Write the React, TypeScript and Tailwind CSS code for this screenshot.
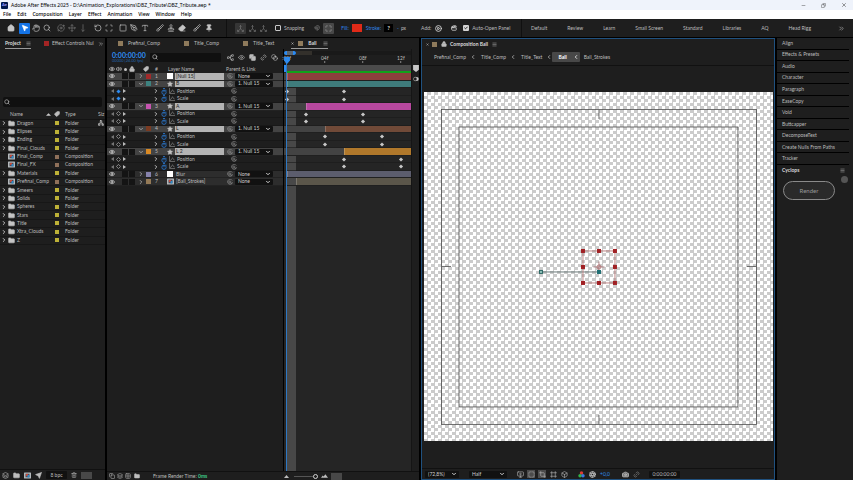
import type { ComponentType, ReactNode } from 'react';
import clsx from 'clsx';
import {
  Aperture, Blend, Box, Brush, Camera, Check, ChevronDown, ChevronLeft, ChevronRight, ChevronsRight,
  CirclePlay, Clapperboard, Copy, Crop, Eraser, Eye, Folder, Frame, Grid2x2, Hand, House, Layers, Link2,
  Lock, Magnet, Maximize, Menu, Minus, MonitorPlay, MousePointer2, Move, MoveDown, Network, Orbit, PenTool, Pin,
  RotateCcw, Scan, Search, Send, Square, SquareDashed, Stamp, Star, Tag, Trash2, Type, Volume2, X,
} from 'lucide-react';

type Icon = ComponentType<{ className?: string; strokeWidth?: number }>;

const MENUS = ['File', 'Edit', 'Composition', 'Layer', 'Effect', 'Animation', 'View', 'Window', 'Help'];

const WORKSPACES = ['Default', 'Review', 'Learn', 'Small Screen', 'Standard', 'Libraries', 'AQ', 'Head Rigg'];

const TOOLS: { label: string; icon: Icon; gap?: string; fill?: boolean; dim?: boolean; active?: boolean }[] = [
  { label: 'Home', icon: House, fill: true },
  { label: 'Selection', icon: MousePointer2, gap: 'ml-[3px]', fill: true, active: true },
  { label: 'Hand', icon: Hand },
  { label: 'Zoom', icon: Search },
  { label: 'Orbit', icon: Orbit, gap: 'ml-[3px]', dim: true },
  { label: 'Pan', icon: Move, dim: true },
  { label: 'Dolly', icon: MoveDown, dim: true },
  { label: 'Rotation', icon: RotateCcw, gap: 'ml-1' },
  { label: 'Pan behind', icon: Scan },
  { label: 'Rectangle', icon: Square, gap: 'ml-[3px]' },
  { label: 'Pen', icon: PenTool },
  { label: 'Type', icon: Type },
  { label: 'Brush', icon: Brush, gap: 'ml-1' },
  { label: 'Clone stamp', icon: Stamp },
  { label: 'Eraser', icon: Eraser, fill: true },
  { label: 'Roto brush', icon: Brush, gap: 'ml-1' },
  { label: 'Puppet pin', icon: Pin, gap: 'ml-px', fill: true },
];

const FILES: { name: string; comp?: boolean }[] = [
  { name: 'Dragon' },
  { name: 'Elipses' },
  { name: 'Ending' },
  { name: 'Final_Clouds' },
  { name: 'Final_Comp', comp: true },
  { name: 'Final_FX', comp: true },
  { name: 'Materials' },
  { name: 'Prefinal_Comp', comp: true },
  { name: 'Smeers' },
  { name: 'Solids' },
  { name: 'Spheres' },
  { name: 'Stars' },
  { name: 'Title' },
  { name: 'Xtra_Clouds' },
  { name: 'Z' },
];

interface Layer {
  id: number;
  name: string;
  parent: string;
  kind: 'null' | 'shape' | 'comp';
  swatch: string;
  bar: string;
  start: number;
  selected?: boolean;
  keys?: number[];
}

const LAYERS: Layer[] = [
  { id: 1, name: '[Null 15]', parent: 'None', kind: 'null', swatch: 'bg-[#a32a2a]', bar: 'bg-[#8c3f3d]', start: 0, selected: true },
  { id: 2, name: 'B', parent: '1. Null 15', kind: 'shape', swatch: 'bg-[#3d8280]', bar: 'bg-[#3f7c7c]', start: 0, selected: true, keys: [0, 6] },
  { id: 3, name: 'A', parent: '1. Null 15', kind: 'shape', swatch: 'bg-[#c754b0]', bar: 'bg-[#b8489f]', start: 2, selected: true, keys: [2, 8] },
  { id: 4, name: 'L', parent: '1. Null 15', kind: 'shape', swatch: 'bg-[#7a3b22]', bar: 'bg-[#714a38]', start: 4, selected: true, keys: [4, 10] },
  { id: 5, name: 'L 2', parent: '1. Null 15', kind: 'shape', swatch: 'bg-[#d98a25]', bar: 'bg-[#b0782b]', start: 6, selected: true, keys: [6, 12] },
  { id: 6, name: 'Blur', parent: 'None', kind: 'null', swatch: 'bg-[#8682ac]', bar: 'bg-[#5c5d6d]', start: 0 },
  { id: 7, name: '[Ball_Strokes]', parent: 'None', kind: 'comp', swatch: 'bg-[#947a57]', bar: 'bg-[#5b564a]', start: 1 },
];

const PANELS = [
  'Align', 'Effects & Presets', 'Audio', 'Character', 'Paragraph', 'EaseCopy', 'Void', 'Buttcapper',
  'DecomposeText', 'Create Nulls From Paths', 'Tracker',
];

// frame number -> horizontal position in the time graph
const at = (frame: number) => `${2 + frame * 7.5}%`;

function Swatch({ className = 'bg-[#8f7b5c]' }: { className?: string }) {
  return <span className={clsx('size-[5px] shrink-0', className)} />;
}

function Tab({ children, active, close }: { children: ReactNode; active?: boolean; close?: boolean }) {
  return (
    <button type="button" className={clsx('flex h-[10px] items-center', active && 'border-b border-[#9a9a9a] font-bold text-[#dcdcdc]')}>
      {close && <X className="mr-1 size-[3px]" strokeWidth={4} />}
      <Swatch />
      <span className="ml-[5px]">{children}</span>
      {active && <Menu className="ml-[6px] size-[5px] text-[#909090]" strokeWidth={3} />}
    </button>
  );
}

function Dropdown({ label, value, className }: { label: string; value: string; className: string }) {
  return (
    <span className={clsx('relative flex shrink-0 items-center rounded-[1px] bg-[#111]', className)}>
      <select aria-label={label} defaultValue={value} className="h-full w-full appearance-none bg-transparent pl-[3px] leading-none text-[#cfcfcf]">
        <option>{value}</option>
      </select>
      <ChevronDown className="pointer-events-none absolute right-[2px] size-[6px] text-[#d0d0d0]" strokeWidth={4} />
    </span>
  );
}

function Pickwhip() {
  return (
    <svg viewBox="0 0 12 12" className="size-[6px] shrink-0 fill-none stroke-[#8c8c8c]" strokeWidth="1.4">
      <path d="M10.5 3A5 5 0 1 0 11 7.2C10.5 9 8 9 7.6 7.6M8 6a2.2 2.2 0 1 1-2.2-2.2C7 3.8 8 4.8 8 6Z" />
    </svg>
  );
}

function CompIcon() {
  return (
    <svg viewBox="0 0 14 14" className="size-[7px] shrink-0">
      <rect y="1" width="14" height="12" rx="1" fill="#b4b8bb" />
      <rect x="3" y="3.5" width="8" height="7" fill="#454e59" />
      <circle cx="6" cy="6" r="2.4" fill="#c9493a" />
      <path d="M7 6h4v5H7z" fill="#2f8ac8" />
    </svg>
  );
}

function Stopwatch() {
  return (
    <svg viewBox="0 0 12 14" className="h-[7px] w-[6px] shrink-0 fill-none stroke-[#2b7bd6]" strokeWidth="1.6">
      <circle cx="6" cy="8.5" r="4.3" />
      <path d="M6 8.5V4M4 1h4M9.5 3.5l1.5 1" />
    </svg>
  );
}

function GraphIcon() {
  return (
    <svg viewBox="0 0 12 12" className="size-[6px] shrink-0 fill-none stroke-[#8a8a8a]" strokeWidth="1.3">
      <path d="M1 0v11h11M2 9c4 0 3-5 5-5s1 4 4 4" />
    </svg>
  );
}

function Diamond({ className }: { className: string }) {
  return (
    <svg viewBox="0 0 10 10" className={clsx('size-[5px] shrink-0', className)} strokeWidth="1.5">
      <path d="M5 .8 9.2 5 5 9.2.8 5Z" />
    </svg>
  );
}

function Arrow({ back }: { back?: boolean }) {
  return (
    <svg viewBox="0 0 6 8" className="h-1 w-[3px] shrink-0">
      <path d={back ? 'M6 0v8L0 4Z' : 'M0 0v8l6-4Z'} fill={back ? '#777' : '#bcbcbc'} />
    </svg>
  );
}

function Axis({ active }: { active?: boolean }) {
  return (
    <button type="button" aria-label="Axis mode" className={clsx('flex size-[11px] items-center justify-center rounded-[1px]', active && 'bg-[#363636]')}>
      <svg viewBox="0 0 14 14" className="size-[7px] fill-none stroke-[#757575]" strokeWidth="1.4">
        <path d="M7 1v7L2 12M7 8l5 4M5 3l2-2 2 2M1 9.5V13h3.5M13 9.5V13H9.5" />
      </svg>
    </button>
  );
}

function TitleBar() {
  return (
    <header className="shrink-0 text-black">
      <div className="flex h-[10px] items-center bg-[#eff3fb] pr-[6px]">
        <span className="ml-px flex size-[7px] items-center justify-center rounded-[1px] bg-[#00174d] text-[4px] font-bold text-[#9999ff]">Ae</span>
        <h1 className="ml-[3px] font-['Noto_Sans',sans-serif] text-[5px]">
          Adobe After Effects 2025 - D:\Animation_Explorations\DBZ_Tribute\DBZ_Tribute.aep *
        </h1>
        <div className="ml-auto flex gap-[15px] text-[#333]">
          <button type="button" aria-label="Minimize"><Minus className="size-[5px]" /></button>
          <button type="button" aria-label="Restore"><Copy className="size-[5px] -scale-x-100" /></button>
          <button type="button" aria-label="Close"><X className="size-[6px]" /></button>
        </div>
      </div>
      <nav className="flex h-[9px] items-center gap-[6px] bg-white pl-[3px] font-['Noto_Sans',sans-serif] text-[5px] font-medium">
        {MENUS.map((menu) => (
          <button key={menu} type="button">{menu}</button>
        ))}
      </nav>
    </header>
  );
}

function Toolbar() {
  return (
    <div className="flex h-[18px] shrink-0 items-center bg-[#1e1e1e] pl-[5px]">
      {TOOLS.map(({ label, icon: ToolIcon, gap, fill, dim, active }) => (
        <button
          key={label}
          type="button"
          aria-label={label}
          className={clsx(
            'flex size-[11px] shrink-0 items-center justify-center rounded-[1px]',
            gap,
            active ? 'bg-[#1473e6] text-white' : dim ? 'text-[#777]' : 'text-[#c4c4c4]',
          )}
        >
          <ToolIcon className={clsx('size-2', fill && 'fill-current')} strokeWidth={2} />
        </button>
      ))}
      <div className="ml-3 flex h-full shrink-0 items-center border-l border-[#101010] pl-2">
        <Axis active />
        <span className="w-px" />
        <Axis />
        <Axis />
        <label className="ml-[6px] flex items-center gap-[3px]">
          <input type="checkbox" className="size-[6px] appearance-none rounded-[1px] border border-[#c8c8c8]" />
          Snapping
        </label>
        <Magnet className="ml-[10px] size-[6px] text-[#999]" />
        <button type="button" aria-label="Snap options" className="ml-[3px] flex size-[11px] items-center justify-center rounded-[1px] bg-[#484848] text-[#aaa]">
          <Maximize className="size-[7px]" />
        </button>
        <button type="button" className="ml-[7px] text-[#2f86e8]">Fill:</button>
        <span className="ml-[3px] h-2 w-[10px] bg-[#e02a18]" />
        <button type="button" className="ml-1 text-[#2f86e8]">Stroke:</button>
        <span className="ml-[3px] flex h-2 w-[9px] items-center justify-center bg-black text-[6px] font-bold text-[#ddd]">?</span>
        <span className="ml-1 flex gap-[2px]"><span className="text-[#2f86e8]">-</span>px</span>
        <span className="ml-[15px]">Add:</span>
        <CirclePlay className="ml-1 size-[7px] text-[#d5d5d5]" strokeWidth={3} />
        <Clapperboard className="ml-[9px] size-[6px] text-[#d5d5d5]" strokeWidth={3} />
        <label className="ml-[6px] flex items-center gap-[3px]">
          <span className="relative flex items-center">
            <input type="checkbox" defaultChecked className="size-[6px] appearance-none rounded-[1px] bg-[#d5d5d5]" />
            <Check className="pointer-events-none absolute left-px size-1 text-black" strokeWidth={5} />
          </span>
          Auto-Open Panel
        </label>
      </div>
      <nav className="ml-auto flex h-full items-center gap-5 border-l border-[#101010] pr-2 pl-[9px]">
        {WORKSPACES.map((name) => (
          <button key={name} type="button" className="whitespace-nowrap">{name}</button>
        ))}
        <button type="button" aria-label="More workspaces" className="ml-[7px]"><ChevronsRight className="size-[7px]" /></button>
      </nav>
    </div>
  );
}

function ProjectPanel() {
  return (
    <section className="flex w-[105px] shrink-0 flex-col bg-[#1e1e1e]">
      <div className="flex h-[11px] items-center pl-[5px]">
        <button type="button" className="flex h-[10px] items-center gap-[5px] border-b border-[#9a9a9a] font-bold text-[#dcdcdc]">
          Project <Menu className="size-[5px] text-[#909090]" strokeWidth={3} />
        </button>
        <Swatch className="ml-[13px] bg-[#a32424]" />
        <button type="button" className="ml-[3px] whitespace-nowrap">Effect Controls Nul</button>
        <ChevronsRight className="mr-px ml-auto size-[6px] shrink-0" />
      </div>
      <label className="mx-[3px] mt-12 flex h-[10px] items-center rounded-[2px] bg-[#101010] pl-px">
        <Search className="size-[6px] text-[#aaa]" strokeWidth={3} />
        <input aria-label="Search project" className="min-w-0 flex-1 bg-transparent" />
      </label>
      <table className="mt-[3px] h-[135px] w-full table-fixed border-collapse text-left">
        <thead>
          <tr className="h-[9px] border-b border-[#141414]">
            <th className="w-[54px] p-0 pl-[10px] font-normal">
              <span className="flex items-center">
                Name
                <svg viewBox="0 0 8 4" className="ml-[23px] h-[3px] w-[5px]"><path d="M0 4 4 0l4 4Z" fill="#ccc" /></svg>
              </span>
            </th>
            <th className="w-[11px] p-0"><Tag className="size-[6px] -scale-x-100 fill-current" /></th>
            <th className="w-[33px] p-0 font-normal">Type</th>
            <th className="w-[7px] overflow-hidden p-0 font-normal">Siz</th>
          </tr>
        </thead>
        <tbody>
          {FILES.map(({ name, comp }, i) => (
            <tr key={name} className="h-2 border-b border-[#171717]">
              <td className="p-0">
                <span className="flex h-[7px] items-center">
                  {comp ? <span className="w-2" /> : <ChevronRight className="mr-px ml-px size-[6px]" strokeWidth={4} />}
                  {comp ? <CompIcon /> : <Folder className="size-[7px] fill-[#c4c4c4]" />}
                  <span className="ml-[2px]">{name}</span>
                </span>
              </td>
              <td className="p-0"><span className={clsx('ml-px block size-[4px]', comp ? 'bg-[#8f705a]' : 'bg-[#bdb137]')} /></td>
              <td className="p-0">{comp ? 'Composition' : 'Folder'}</td>
              <td className="p-0">{i === 0 && <Network className="size-[6px]" strokeWidth={3} />}</td>
            </tr>
          ))}
        </tbody>
      </table>
      <footer className="mt-auto flex h-[11px] items-center gap-1 border-t border-[#111] px-[2px]">
        <Layers className="size-[7px]" />
        <Folder className="size-[7px] fill-current" />
        <CompIcon />
        <Send className="size-[7px] fill-current" />
        <button type="button" className="h-2 w-[21px] rounded-[1px] bg-[#111]">8 bpc</button>
        <Trash2 className="size-[6px]" />
        <span className="h-[7px] w-[11px] bg-[#484848]" />
      </footer>
    </section>
  );
}

function Switches() {
  return (
    <>
      <Eye className="ml-[2px] size-[6px] shrink-0 text-[#d0d0d0]" strokeWidth={3} />
      <span className="ml-[7px] h-[6px] w-[6px] shrink-0 bg-[#141414]" />
      <span className="ml-px h-[6px] w-[6px] shrink-0 bg-[#141414]" />
    </>
  );
}

function LayerRow({ layer }: { layer: Layer }) {
  const { id, name, parent, kind, swatch, selected, keys } = layer;
  const Chevron = keys ? ChevronDown : ChevronRight;
  return (
    <div className={clsx('flex min-h-0 flex-1 items-center border-b border-[#222]', selected ? 'bg-[#434343]' : 'bg-[#2d2d2d]')}>
      <Switches />
      <Chevron className="ml-[3px] size-[6px] shrink-0" strokeWidth={3} />
      <Swatch className={clsx('ml-[2px]', swatch)} />
      <span className="ml-1 w-3 shrink-0">{id}</span>
      <span className="flex w-2 shrink-0">
        {kind === 'null' && <span className="size-[6px] bg-white" />}
        {kind === 'shape' && <Star className="size-[6px] fill-[#c0c0c0] text-[#c0c0c0]" />}
        {kind === 'comp' && <CompIcon />}
      </span>
      <span className={clsx('flex h-full w-[49px] shrink-0 items-center pl-px', selected && 'bg-[#b4b4b4] text-[#222]')}>{name}</span>
      <span className="w-[3px] shrink-0" />
      <Pickwhip />
      <Dropdown label={`Parent of ${name}`} value={parent} className="ml-[2px] h-[6px] w-[38px]" />
    </div>
  );
}

function PropertyRow({ name, id }: { name: string; id: number }) {
  return (
    <div className="flex min-h-0 flex-1 items-center border-b border-[#181818]">
      <span className="flex w-[46px] shrink-0 items-center gap-[2px] pl-1">
        <Arrow back />
        <Diamond className={id === 2 ? 'fill-[#2d8bf0]' : 'fill-none stroke-[#aaa]'} />
        <Arrow />
      </span>
      <ChevronRight className="size-[6px] shrink-0" strokeWidth={4} />
      <span className="ml-[2px] flex gap-[2px]"><Stopwatch /><GraphIcon /></span>
      <span className="ml-[2px] w-[54px] shrink-0">{name}</span>
      <Pickwhip />
    </div>
  );
}

function LayerList() {
  return (
    <div className="flex w-[177px] shrink-0 flex-col border-r border-black">
      <div className="flex h-4 items-center pl-[5px]">
        <div className="w-[38px] text-[#2d8bf0]">
          <p className="text-[7px] font-bold leading-[8px]">0:00:00:00</p>
          <p className="text-[4px] leading-[4px] text-[#2467ad]">00000 (24.00 fps)</p>
        </div>
        <label className="flex h-[9px] w-[71px] items-center rounded-[1px] bg-[#101010] pl-[2px]">
          <Search className="size-[6px] text-[#aaa]" strokeWidth={3} />
          <input aria-label="Search layers" className="min-w-0 flex-1 bg-transparent" />
        </label>
        <div className="ml-[6px] flex gap-1 text-[#bbb]">
          <Network className="size-[7px] -rotate-90" />
          <Eye className="size-[7px]" />
          <Copy className="size-[7px] fill-current" />
          <Link2 className="size-[7px] -rotate-45" />
          <Blend className="size-[7px]" />
        </div>
      </div>
      <div className="flex h-2 items-center">
        <Eye className="ml-[2px] size-[6px]" strokeWidth={3} />
        <Volume2 className="ml-px size-[6px]" strokeWidth={3} />
        <span className="mx-[2px] size-[3px] rounded-full bg-[#c4c4c4]" />
        <Lock className="size-[6px] fill-current" />
        <Tag className="ml-2 size-[6px] -scale-x-100 fill-current" />
        <span className="ml-[6px] w-[13px]">#</span>
        <span className="w-[58px]">Layer Name</span>
        <span className="whitespace-nowrap">Parent &amp; Link</span>
      </div>
      <div className="flex h-[113px] flex-col">
        {LAYERS.map((layer) => [
          <LayerRow key={layer.id} layer={layer} />,
          ...(layer.keys ? ['Position', 'Scale'] : []).map((name) => (
            <PropertyRow key={`${layer.id}-${name}`} id={layer.id} name={name} />
          )),
        ])}
      </div>
    </div>
  );
}

function TimeGraph() {
  return (
    <div className="relative flex min-w-0 flex-1 flex-col bg-[#252525]">
      <div className="h-4 bg-[#1e1e1e] pt-[2px]">
        <div className="flex h-[4px] items-center bg-[#191919]">
          <span className="h-full w-[3px] rounded-l-full bg-[#2d8bf0]" />
          <span className="h-full w-[6px] bg-[#5b6672]" />
          <span className="h-full w-[3px] rounded-r-full bg-[#2d8bf0]" />
          <span className="h-full w-4 bg-[#33302b]" />
        </div>
        <div className="relative mt-px h-2">
          {[0, 4, 8, 12].map((frame) => (
            <span key={frame} className="absolute flex -translate-x-1/2 flex-col items-center" style={{ left: at(frame) }}>
              {frame === 0 ? ':00f' : `${String(frame).padStart(2, '0')}f`}
              <span className="h-[2px] w-px bg-[#888]" />
            </span>
          ))}
        </div>
      </div>
      <div className="absolute top-4 bottom-0 left-[2px] w-[10px] bg-[#484848]" />
      <div className="relative flex h-2 flex-col pl-[2px]">
        <div className="flex-1 bg-[#4b4b4b]" />
        <div className="h-[2px] bg-[#10a31a]" />
      </div>
      <div className="relative flex h-[113px] flex-col">
        {LAYERS.map((layer) => [
          <div key={layer.id} className={clsx('flex min-h-0 flex-1 border-b border-[#202020]', layer.selected && 'bg-[#434343]')}>
            <div className="shrink-0" style={{ width: at(layer.start) }} />
            <div className={clsx('flex-1 border-l border-white/20', layer.bar)} />
          </div>,
          ...(layer.keys ? ['Position', 'Scale'] : []).map((name) => (
            <div key={`${layer.id}-${name}`} className="relative min-h-0 flex-1 border-b border-[#1b1b1b]/60">
              {layer.keys?.map((frame) => (
                <span key={frame} className="absolute top-px -translate-x-1/2" style={{ left: at(frame) }}>
                  <Diamond className="fill-[#c8c8c8]" />
                </span>
              ))}
            </div>
          )),
        ])}
      </div>
      <div className="absolute top-2 bottom-0 left-[2px] w-px bg-[#2d78c4]" />
      <svg viewBox="0 0 10 12" className="absolute top-2 left-0 h-[7px] w-[6px] fill-[#2d8bf0]"><path d="M0 0h10v6l-5 6-5-6Z" /></svg>
      <span className="absolute top-4 left-0 h-[7px] w-[2px] bg-[#2d8bf0]" />
    </div>
  );
}

function TimelinePanel() {
  return (
    <section className="flex min-w-0 flex-[313] flex-col bg-[#1e1e1e]">
      <div className="flex h-[11px] items-center pl-[11px]">
        <Tab>Prefinal_Comp</Tab>
        <span className="w-6" />
        <Tab>Title_Comp</Tab>
        <span className="w-6" />
        <Tab>Title_Text</Tab>
        <span className="w-[17px]" />
        <Tab active close>Ball</Tab>
      </div>
      <div className="flex flex-1">
        <LayerList />
        <TimeGraph />
        <div className="flex w-2 shrink-0 flex-col items-center gap-1 border-l border-[#151515] pt-4 text-[#c8c8c8]">
          <svg viewBox="0 0 10 12" className="h-[7px] w-[6px] fill-current"><path d="M0 0h10v8l-5 4-5-4Z" /></svg>
          <svg viewBox="0 0 12 12" className="size-[6px]">
            <circle cx="7.5" cy="6" r="4" fill="currentColor" />
            <circle cx="4.5" cy="6" r="3.6" fill="#1e1e1e" stroke="currentColor" />
          </svg>
        </div>
      </div>
      <footer className="flex h-[9px] items-center border-t border-[#111] pl-[2px]">
        <Copy className="size-[6px]" />
        <Layers className="ml-[2px] size-[6px]" />
        <Grid2x2 className="ml-[2px] size-[6px]" />
        <Folder className="ml-[3px] size-[6px] fill-current" />
        <span className="ml-[13px] w-[131px]">Frame Render Time: <span className="font-bold text-[#3fc98a]">0ms</span></span>
        <svg viewBox="0 0 10 6" className="h-[3px] w-[5px] fill-current"><path d="M0 6 5 0l5 6Z" /></svg>
        <input
          type="range"
          aria-label="Time zoom"
          defaultValue={100}
          className="ml-[5px] h-[5px] w-[24px] appearance-none bg-[linear-gradient(#555,#555)] bg-[length:100%_1px] bg-center bg-no-repeat [&::-webkit-slider-thumb]:size-[5px] [&::-webkit-slider-thumb]:appearance-none [&::-webkit-slider-thumb]:rounded-full [&::-webkit-slider-thumb]:border [&::-webkit-slider-thumb]:border-[#d0d0d0] [&::-webkit-slider-thumb]:bg-[#1e1e1e]"
        />
        <svg viewBox="0 0 16 8" className="ml-[3px] h-1 w-[7px] fill-current"><path d="M0 8l4-5 2 2 4-5 6 8Z" /></svg>
        <span className="ml-[3px] h-[7px] w-[11px] bg-[#484848]" />
      </footer>
    </section>
  );
}

const HANDLES = [
  [159, 159], [175, 159], [191, 159], [159, 175], [191, 175], [159, 191], [175, 191], [191, 191],
];

function Canvas() {
  return (
    <div className="aspect-square w-full bg-white bg-[conic-gradient(#cbcbcb_25%,#fff_0_50%,#cbcbcb_0_75%,#fff_0)] bg-[length:7px_7px]">
      <svg viewBox="0 0 349 349" className="block size-full fill-none">
        <g stroke="#4c4c4c" strokeWidth=".8">
          <rect x="17.5" y="17.5" width="315" height="315" />
          <rect x="35" y="35" width="279" height="280" />
          <path d="M175 18v9M175 323v9M18 174.500h9M323 174.500h9" />
        </g>
        <path d="M117 180h58" stroke="#6b7a7a" strokeWidth="1" />
        <rect x="159" y="159" width="32" height="32" stroke="#b06b6b" strokeWidth=".8" />
        {HANDLES.map(([x, y]) => (
          <rect key={`${x}-${y}`} x={x - 2} y={y - 2} width="4" height="4" fill="#a02024" />
        ))}
        <path d="M175 169.500v11M169.500 175h11" stroke="#a06a70" strokeWidth=".8" />
        <circle cx="175" cy="175" r="2" stroke="#b06b6b" strokeWidth=".8" />
        <rect x="115.5" y="178.5" width="3" height="3" fill="#8fc0b8" stroke="#2f6a66" />
        <rect x="173" y="178" width="4" height="4" fill="#1f6f73" />
      </svg>
    </div>
  );
}

function CompositionPanel() {
  return (
    <section className="flex min-w-0 flex-[353] flex-col border border-[#20517f] bg-[#1e1e1e]">
      <div className="flex h-[10px] items-center pl-[4px]">
        <X className="size-[3px]" strokeWidth={4} />
        <Swatch className="ml-[3px] bg-[#8f7b5c]" />
        <Lock className="ml-1 size-[6px] fill-current" />
        <span className="ml-[3px] font-bold text-[#dcdcdc]">Composition Ball</span>
        <Menu className="ml-1 size-[5px] text-[#909090]" strokeWidth={3} />
      </div>
      <nav className="flex h-[17px] items-center border-b border-[#111] pl-3 whitespace-nowrap">
        <button type="button">Prefinal_Comp</button>
        <ChevronLeft className="mr-[5px] ml-1 size-[6px]" strokeWidth={3} />
        <button type="button">Title_Comp</button>
        <ChevronLeft className="mr-[5px] ml-1 size-[6px]" strokeWidth={3} />
        <button type="button">Title_Text</button>
        <ChevronLeft className="ml-1 size-[6px]" strokeWidth={3} />
        <button type="button" className="flex h-[10px] items-center gap-[6px] rounded-[1px] bg-[#484848] pr-px pl-[6px] font-bold text-white">
          Ball <ChevronLeft className="size-[6px]" strokeWidth={3} />
        </button>
        <button type="button" className="ml-1">Ball_Strokes</button>
      </nav>
      <div className="flex flex-1 items-center pr-px pb-px pl-[2px]">
        <Canvas />
      </div>
      <footer className="flex h-[11px] items-center border-t border-[#111] pl-[3px]">
        <Dropdown label="Magnification" value="(72,8%)" className="h-[7px] w-[34px]" />
        <Dropdown label="Resolution" value="Half" className="ml-[10px] h-[7px] w-[38px]" />
        <div className="ml-[9px] flex items-center gap-[3px]">
          <span className="flex size-2 items-center justify-center"><MonitorPlay className="size-[7px]" /></span>
          <span className="flex size-2 items-center justify-center bg-[#4c4c4c]"><SquareDashed className="size-[7px]" /></span>
          <span className="flex size-2 items-center justify-center bg-[#4c4c4c]"><Crop className="size-[7px]" /></span>
          <span className="flex size-2 items-center justify-center"><Frame className="size-[7px]" /></span>
          <span className="flex size-2 items-center justify-center"><Box className="size-[7px]" /></span>
        </div>
        <svg viewBox="0 0 12 12" className="ml-[10px] size-[7px]">
          <circle cx="6" cy="3.5" r="3" fill="#dd3b33" />
          <circle cx="3.5" cy="8" r="3" fill="#32b449" />
          <circle cx="8.5" cy="8" r="3" fill="#3b78e0" />
        </svg>
        <Aperture className="ml-1 size-[7px]" strokeWidth={3} />
        <span className="ml-1 text-[#2d8bf0]">+0,0</span>
        <Camera className="ml-3 size-[7px] fill-[#777]" strokeWidth={3} />
        <Link2 className="ml-1 size-[7px] -rotate-45 text-[#888]" />
        <span className="ml-[9px] flex h-[7px] w-[31px] items-center justify-center rounded-[1px] bg-[#111]">0:00:00:00</span>
      </footer>
    </section>
  );
}

function SidePanels() {
  return (
    <aside className="w-[76px] shrink-0 bg-[#1e1e1e] pr-1">
      <ul className="flex h-[127px] flex-col">
        {PANELS.map((name) => (
          <li key={name} className="flex flex-1 items-center border-b border-black pl-[5px]">
            <button type="button" className="whitespace-nowrap">{name}</button>
          </li>
        ))}
      </ul>
      <div className="flex h-[11px] items-center justify-between pr-1 pl-[5px] font-bold text-[#dcdcdc]">
        Cyclops <Menu className="size-[5px] text-[#909090]" strokeWidth={3} />
      </div>
      <div className="flex">
        <button type="button" className="mt-[5px] ml-[6px] h-[19px] w-[52px] rounded-full border border-[#8a8a8a] bg-[#2a2a2a] text-[6px] text-[#999]">
          Render
        </button>
        <span className="ml-[6px] size-[7px] shrink-0 rounded-full bg-[#555]" />
      </div>
    </aside>
  );
}

export default function App() {
  return (
    <div className="flex h-screen flex-col overflow-hidden bg-black font-[Lato,'Open_Sans',sans-serif] text-[5px] leading-none text-[#bdbdbd]">
      <TitleBar />
      <Toolbar />
      <main className="mt-px flex min-h-0 flex-1 gap-[2px]">
        <ProjectPanel />
        <TimelinePanel />
        <CompositionPanel />
        <SidePanels />
      </main>
    </div>
  );
}
